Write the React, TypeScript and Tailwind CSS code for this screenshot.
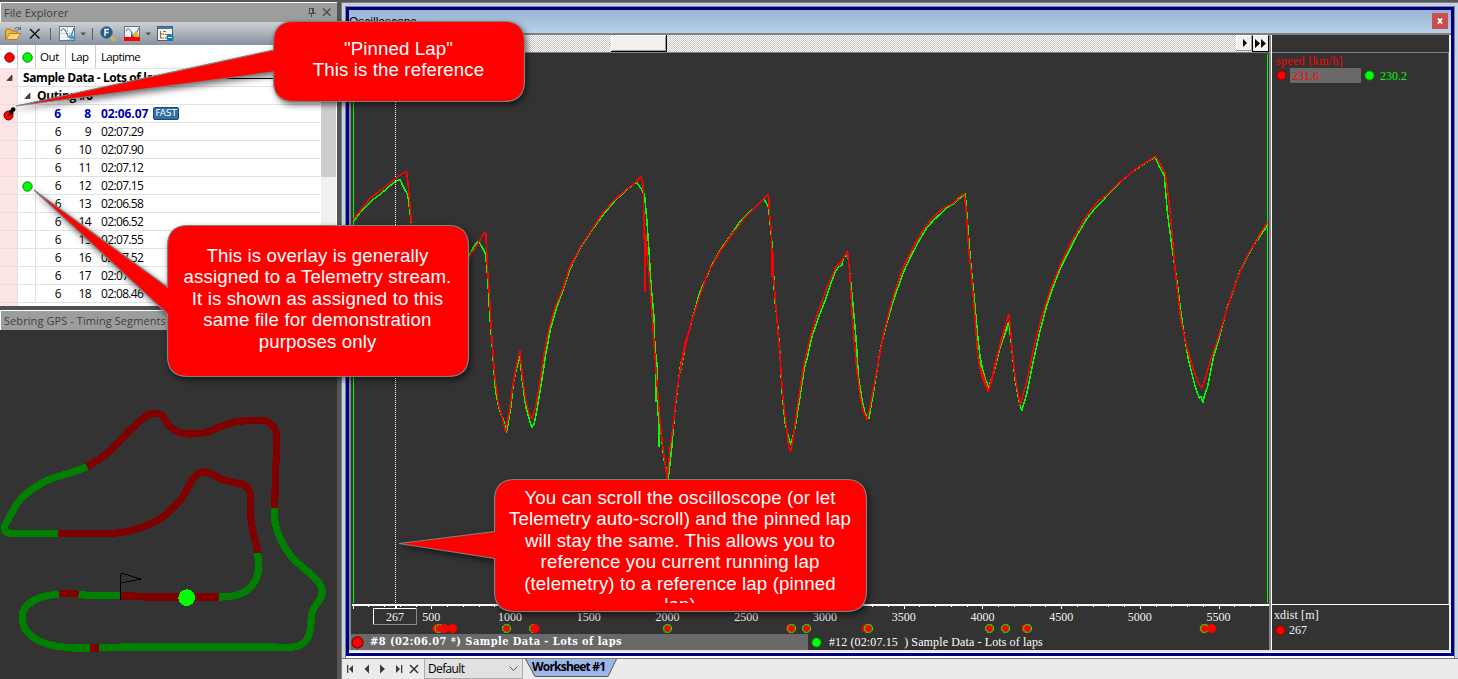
import React from "react";

const laps: [number, string][] = [
  [8, "02:06.07"],
  [9, "02:07.29"],
  [10, "02:07.90"],
  [11, "02:07.12"],
  [12, "02:07.15"],
  [13, "02:06.58"],
  [14, "02:06.52"],
  [15, "02:07.55"],
  [16, "02:07.52"],
  [17, "02:07.52"],
  [18, "02:08.46"],
];

const UI = "font-['Open_Sans',sans-serif]";
const SERIF = "font-['DejaVu_Serif_Condensed','DejaVu_Serif',serif]";

function Dot({ color, size = 11 }: { color: "red" | "green"; size?: number }) {
  return (
    <svg width={size} height={size} viewBox="0 0 11 11" className="shrink-0">
      <circle cx="5.5" cy="5.5" r="4.7" fill={color === "red" ? "#ff0000" : "#00ff00"} stroke={color === "red" ? "#7d0000" : "#007d00"} />
    </svg>
  );
}

function TitleBar({ text, buttons }: { text: string; buttons?: boolean }) {
  return (
    <div className="flex h-5 shrink-0 items-center border-l border-t border-white bg-[#9c9e9d] pl-[3px] pr-[6px] text-[#3f3f3f]">
      <span className={`${UI} whitespace-nowrap pb-px text-[11px] leading-none tracking-[0.08px]`}>{text}</span>
      {buttons && (
        <svg width="28" height="12" className="ml-auto" fill="none" stroke="#4c4c4c">
          <path d="M6.500 1V6.500M10.500 1V6.500M6 1.500H11M4.500 6.500H12.500M8.500 7V10" shapeRendering="crispEdges" />
          <path d="M9.500 2V6" />
          <path d="M20 1.500 27.500 9M27.500 1.500 20 9" strokeWidth="1.500" />
        </svg>
      )}
    </div>
  );
}

function Toolbar() {
  return (
    <div className="h-[23px] shrink-0 bg-gradient-to-b from-[#ced1d4] to-[#8992a0]">
      <svg width="337" height="23" viewBox="0 22 337 23" fill="none">
        <path d="M5.500 39V30.500L7 29H10L12 31H17V33" fill="#e8b844" stroke="#a87418" />
        <path d="M6 39.500 9.500 33.500H21L17 39.500Z" fill="#fbd56e" stroke="#b27e20" />
        <path d="M14 29Q17 26 20 28.500M20.500 26.500V29.500H17.500" stroke="#4f7198" />
        <path d="M30 29 39.500 38.500M39.500 29 30 38.500" stroke="#111" strokeWidth="1.500" />
        <path d="M50.500 28V40M92.500 28V40" stroke="#57606c" />
        <rect x="59.500" y="26.500" width="15" height="14" fill="#f1f4f7" stroke="#66798c" />
        <path d="M60 33.500H74M67.500 27V40" stroke="#b8c6d5" strokeDasharray="2 1" />
        <path d="M61 31C63 27 65 29 67 34S71 37 74 28" stroke="#285c8e" />
        <path d="M72 34V41M68.500 37.500H75.500M69.500 35 74.500 40M74.500 35 69.500 40" stroke="#2687cc" />
        <path d="M80.500 32.500H86L83.250 35.500Z" fill="#4e4e4e" />
        <path d="M110 36 115 40.500" stroke="#e1b532" strokeWidth="3" />
        <circle cx="106.500" cy="32.500" r="5.800" fill="#235a88" stroke="#426c91" />
        <path d="M105 36V29.500H109M105 32.500H108.500" stroke="white" strokeWidth="1.400" />
        <rect x="124.500" y="26.500" width="15" height="14" fill="#eef2f6" stroke="#66798c" />
        <path d="M126 31C128 27 130 29 132 33S136 34 139 28" stroke="#285c8e" />
        <path d="M132 37 136 30.500 139.500 37Z" fill="#e6b21c" />
        <path d="M131 37V33L134 37Z" fill="#216496" />
        <rect x="124" y="37" width="16" height="4" fill="#f00" />
        <path d="M145.500 32.500H151L148.250 35.500Z" fill="#4e4e4e" />
        <rect x="157.500" y="26.500" width="15" height="14" fill="#f5f2df" stroke="#41647f" />
        <path d="M158 28H172" stroke="#397bab" strokeWidth="2" />
        <path d="M160.500 31V38H164M160.500 34H164M163 31.500H166M165 34.500H169M165 38H168" stroke="#8a6d45" />
        <circle cx="170" cy="37.500" r="3.500" fill="#087ec2" />
        <path d="M168 37.500H172" stroke="white" />
      </svg>
    </div>
  );
}

function Expander() {
  return (
    <svg width="7" height="7" viewBox="0 0 7 7" className="shrink-0">
      <path d="M6 1V6.500H0.800Z" fill="#444" stroke="#222" strokeWidth="0.600" />
    </svg>
  );
}

function LapTable() {
  return (
    <div className={`${UI} flex h-[261px] shrink-0 flex-col overflow-hidden bg-white text-[12px] text-black`}>
      <div className="flex h-6 shrink-0 border-b border-[#e4e4e4] text-[11.500px] tracking-[-0.650px]">
        <div className="flex w-[18px] items-center justify-center border-r border-[#ccc] pl-px pt-px"><Dot color="red" /></div>
        <div className="flex w-[18px] items-center justify-center border-r border-[#ccc] pl-px pt-px"><Dot color="green" /></div>
        <div className="flex w-[30px] items-center border-r border-[#ccc] pl-1 pt-px tracking-[-0.400px]">Out</div>
        <div className="flex w-[30px] items-center border-r border-[#ccc] pl-[5px] pt-px">Lap</div>
        <div className="flex items-center pl-[5px] pt-px">Laptime</div>
      </div>
      <div className="flex min-h-0 flex-1">
        <div className="flex w-[320px] flex-col">
          <div className="flex h-[18px] shrink-0">
            <div className="flex w-[18px] items-center border-b border-r border-[#e2e2e2] bg-[#ffe4e4] pl-[6px]"><Expander /></div>
            <div className="flex flex-1 items-center border-b border-[#e2e2e2] pl-[5px] font-bold">
              <span className="whitespace-nowrap text-[12px] tracking-[-0.420px]">Sample Data - Lots of laps</span>
              <div className="ml-1 mt-px h-px flex-1 bg-black" />
            </div>
          </div>
          <div className="flex h-[18px] shrink-0">
            <div className="w-[18px] border-b border-r border-[#e2e2e2] bg-[#ffe4e4]" />
            <div className="flex flex-1 items-center gap-[6px] border-b border-[#e2e2e2] pl-[6px] font-bold">
              <Expander />
              <span className="whitespace-nowrap text-[12px] tracking-[-0.350px]">Outing #6</span>
            </div>
          </div>
          {laps.map(([lap, time]) => (
            <div key={lap} className="flex h-[18px] shrink-0 leading-[17px]">
              <div className="flex w-[18px] items-center justify-center border-b border-r border-[#e2e2e2] bg-[#ffe4e4]">
                {lap === 8 && (
                  <svg width="15" height="16" viewBox="0 0 15 16" className="ml-[2px] shrink-0">
                    <circle cx="6.500" cy="9.500" r="4.500" fill="#f00" stroke="#7d0000" />
                    <path d="M6 10 9 7" stroke="#000" strokeWidth="1.500" />
                    <path d="M7.500 4.500 11 8M9 6 11.500 3.500" stroke="#000" strokeWidth="2.600" />
                    <circle cx="11.200" cy="3.500" r="2.300" />
                  </svg>
                )}
              </div>
              <div className="flex w-[18px] items-center justify-center border-b border-r border-[#e2e2e2] pl-px pt-[2px]">
                {lap === 12 && <Dot color="green" />}
              </div>
              <div className={lap === 8 ? "flex flex-1 items-center border-b border-[#e2e2e2] font-bold text-[#0000b4]" : "flex flex-1 items-center border-b border-[#e2e2e2] text-[12px] tracking-[-0.650px]"}>
                <span className="w-[25px] text-right">6</span>
                <span className="w-[30px] text-right">{lap}</span>
                <span className={lap === 8 ? "ml-[10px] tracking-[-0.100px]" : "ml-[10px]"}>{time}</span>
                {lap === 8 && (
                  <span className="ml-[5px] flex h-[13px] w-[26px] items-center justify-center rounded-[2px] border border-[#174b75] bg-[#346f9f] font-['DejaVu_Sans',sans-serif] text-[9px] font-normal leading-none tracking-[-0.100px] text-white">FAST</span>
                )}
              </div>
            </div>
          ))}
          <div className="w-[18px] flex-1 border-r border-[#e2e2e2] bg-[#ffe4e4]" />
        </div>
        <div className="ml-px w-[15px] bg-[#f0f0f0]">
          <div className="h-[108px] bg-[#cdcdcd]" />
        </div>
      </div>
    </div>
  );
}

function TrackMap() {
  return (
    <svg width="337" height="349" viewBox="0 330 337 349" className="block bg-[#333]" shapeRendering="crispEdges">
      <g transform="translate(0.3 390.3) scale(.33333)" fill="none" strokeWidth="21.500">
        <g stroke="#008000">
          <path d="M259 229C215 252 182 251 140 271C101 289 67 314 47 344L25 386C12 402 9 410 15 423C25 432 40 430 60 430H140L172 429" />
          <path d="M823 352V390C829 430 846 463 871 496C903 533 923 540 947 567C970 592 971 610 954 634C932 662 933 675 932 697C930 738 919 758 890 768C865 775 850 772 820 770H370L297 773" />
          <path d="M268 773H220C180 770 127 766 93 737C60 712 60 667 78 648C102 621 136 614 176 612" />
          <path d="M234 613 285 616H362" />
          <path d="M657 620C706 621 736 609 756 584C777 558 777 532 772 488" />
        </g>
        <g stroke="#800000">
          <path d="M259 229C295 211 327 187 351 160L386 122 430 82C454 64 478 64 490 82C505 113 527 130 565 131C626 133 641 114 681 101C713 90 742 91 795 91C817 101 828 113 829 142V180L826 240 823 352" />
          <path d="M172 429H339C379 426 410 417 440 405C477 391 499 373 531 340C567 304 562 275 590 252C613 238 632 247 651 260C679 276 696 275 725 281C745 291 751 302 751 331C748 369 751 397 759 430C765 455 771 467 772 488" />
          <path d="M362 617H400L430 620H657M176 609H215L235 612M268 773H297" />
        </g>
        <path d="M361.500 629V550H368L422 566 362 578" stroke="#000" strokeWidth="3" />
        <circle cx="559" cy="622" r="25" fill="#0f0" stroke="none" />
      </g>
    </svg>
  );
}

const redLine = {
  a: "39,267 55,248 90,204 108,190 135,170 160,150 185,130 199,124 203,155 209,218 214,285 240,420 290,470 350,440 388,382 412,342 433,307 437,310 441,400 448,500 454,610 463,730 475,820 487,865 496,905 508,840 517,770 528,710 539,659 547,740 557,810 567,850 575,865 587,830 600,750 612,670 625,600 645,530 668,475 687,415 720,350 750,305 785,252 815,217 855,180 888,155 903,139 909,165 912,310 915,485 917,310 921,370 928,450 935,540 943,660 952,780 960,880 971,975 981,1045 990,950 1000,880 1008,800 1021,710 1035,635 1050,594",
  b: "0,665 8,620 20,570 32,520 45,480 58,440 72,400 84,365 100,340 117,307 135,282 155,252 175,228 195,200 215,180 245,150 265,132 268,190 274,250 276,380 278,305 280,380 288,480 298,600 308,740 320,840 325,885 331,905 338,870 352,765 370,650 383,590 395,545 410,495 430,440 442,405 455,380 467,350 480,338 490,322 502,303 508,360 517,510 530,660 540,740 550,785 561,808 570,765 590,660 610,550 625,490 645,420 665,360 685,320 710,270 738,225 755,205 785,177 800,168 820,158 834,142 852,130 858,180 865,290 875,390 885,510 893,620 905,680 924,724 935,690 955,600 970,550 985,492 989,510",
  c: "0,680 12,715 25,753 45,670 65,590 86,522 90,555 95,620 105,710 120,795 135,740 145,700 160,625 180,545 200,480 215,435 240,375 270,310 310,240 335,205 355,182 375,167 400,142 425,120 450,100 475,80 500,65 525,47 540,70 555,98 562,150 570,215 585,390 602,540 620,620 640,690 655,730 666,742 675,715 690,662 710,605 730,540 755,460 785,380 805,340 820,315 840,280 862,245",
};
const greenLine = {
  a: "39,274 65,240 93,212 120,192 150,166 168,152 180,148 190,171 203,194 209,245 214,285 240,430 300,480 350,430 388,372 402,347 415,332 425,349 436,372 442,435 449,560 457,660 466,785 478,840 490,870 499,907 512,830 520,755 530,710 539,679 546,750 557,830 568,870 575,892 582,880 590,840 605,750 617,670 630,600 650,530 670,475 690,415 720,352 755,300 790,252 825,211 855,182 888,155 901,173 913,193 920,270 927,370 933,470 941,555 945,670 947,815 949,670 952,780 957,950 960,880 971,985 984,1045 994,960 1004,840 1020,712 1035,639 1050,590",
  b: "0,668 15,590 27,540 45,475 57,431 70,400 95,345 116,305 135,278 155,250 180,212 200,193 220,175 245,150 252,147 265,172 272,240 278,310 283,440 292,520 298,590 306,730 315,820 325,860 332,885 345,830 358,750 372,655 382,620 395,560 414,504 435,450 450,405 465,365 475,350 485,345 490,320 503,315 508,360 518,460 528,570 535,680 545,745 555,790 566,805 580,725 600,600 615,535 640,450 670,365 695,312 720,265 740,232 760,210 800,172 820,160 855,130 860,190 870,320 882,440 893,560 903,650 915,690 926,715 940,670 960,590 988,515 989,530",
  c: "0,650 8,690 15,715 25,740 40,700 65,595 86,545 95,625 105,720 118,790 125,810 140,760 160,660 180,570 200,495 215,450 240,385 285,295 320,235 340,210 360,190 390,155 420,125 450,100 485,75 525,50 538,80 552,105 562,220 578,340 590,420 600,500 610,570 625,660 645,740 658,775 662,768 668,787 672,768 682,740 700,650 715,600 740,505 780,390 820,315 862,255",
};

function Trace({ color, data }: { color: string; data: { a: string; b: string; c: string } }) {
  return (
    <g fill="none" stroke={color} strokeWidth="4.600" strokeLinejoin="bevel">
      <polyline transform="translate(340.2 130.3) scale(.33333)" points={data.a} />
      <polyline transform="translate(680.2 150.3) scale(.33333)" points={data.b} />
      <polyline transform="translate(980.2 140.3) scale(.33333)" points={data.c} />
    </g>
  );
}

const minorTicks = Array.from({ length: 58 }, (_, i) => i);
const majorLabels = [500, 1000, 1500, 2000, 2500, 3000, 3500, 4000, 4500, 5000, 5500];
const plainMarkers = [437, 790.5, 866.5, 1026, 1204];
const ringMarkers = [439, 506.5, 533.5, 667.5, 791.5, 806.5, 868.5, 989.5, 1005.5, 1027.5, 1204.5];
const topMarkers = [444, 452.5, 535, 1211.5];

function Plot() {
  return (
    <svg width="918" height="581" viewBox="351 53 918 581" className="block">
      <g shapeRendering="crispEdges">
        <path d="M353.500 54V603M1267.500 54V603" stroke="#0f0" />
        <path d="M395.500 54V603" stroke="#fff" strokeDasharray="1 1" />
        <Trace color="#00ff00" data={greenLine} />
        <Trace color="#ff0000" data={redLine} />
        <path d="M352 605H1269" stroke="#fff" strokeWidth="2" />
        {minorTicks.map((i) => (
          <path key={i} d={`M${Math.round(352.6 + i * 15.745)}.5 606V${i % 5 === 0 ? 609 : 607}`} stroke="#fff" />
        ))}
        <path d="M395.500 606V608" stroke="#fff" strokeWidth="2" />
        <path d="M416 608.500H373.500V624" fill="none" stroke="#fff" />
        <path d="M373 624.500H416.500V608" fill="none" stroke="#8a8a8a" />
      </g>
      <g className="font-['Liberation_Serif',serif] text-[12px]" fill="#f4f4f4" textAnchor="middle">
        <text x="395" y="621">267</text>
        {majorLabels.map((v) => (
          <text key={v} x={352.6 + v * 0.15745} y="621">{v}</text>
        ))}
      </g>
      {plainMarkers.map((x) => (
        <circle key={x} cx={x} cy="628.500" r="4.500" fill="#f00" />
      ))}
      {ringMarkers.map((x) => (
        <circle key={x} cx={x} cy="628.500" r="4" fill="#f00" stroke="#0f0" strokeWidth="1.200" strokeDasharray="2.600 0.600" />
      ))}
      {topMarkers.map((x) => (
        <circle key={x} cx={x} cy="628.500" r="4.500" fill="#f00" />
      ))}
    </svg>
  );
}

function Oscilloscope() {
  return (
    <div className="flex h-[655px] flex-col border-x-[3px] border-t-[3px] border-[#c5d2ea] bg-[#c5d2ea]">
      <div className="flex h-[652px] flex-col border border-[#808080] border-b-0">
        <div className="flex h-[649px] flex-col border-[3px] border-[#000080] bg-[#333]">
          <div className="flex h-[23px] shrink-0 items-center justify-between bg-gradient-to-b from-[#99b4d1] to-[#b9d1ea] pr-[3px]">
            <span className="pt-px text-[12px] leading-none text-black font-['Liberation_Sans',sans-serif]">Oscilloscope</span>
            <div className="mb-[2px] flex h-4 w-4 items-center justify-center bg-[#c75050]">
              <svg width="6" height="6" viewBox="0 0 6 6"><path d="M1 0.500 5 5.500M5 0.500 1 5.500" stroke="#fff" strokeWidth="1.800" /></svg>
            </div>
          </div>
          <div className="h-[2px] shrink-0 bg-[#808080]" />
          <div className="flex min-h-0 flex-1 border-r-2 border-[#eee]">
            <div className="flex w-[920px] flex-col border-l-2 border-[#8a8a8a]">
              <div className="flex h-[17px] shrink-0 bg-[#f6f6f6] bg-[repeating-conic-gradient(#c4c4c4_0_25%,#fff_0_50%)] bg-[size:2px_2px]">
                <div className="ml-[260px] h-[17px] w-[56px] border-b border-r border-b-black border-r-black bg-white">
                  <div className="ml-px mt-px h-[15px] border-b border-r border-[#999] bg-[#f0f0f0]" />
                </div>
                <div className="ml-auto flex h-4 w-4 items-center justify-center border border-b-[#999] border-l-white border-r-[#999] border-t-white bg-[#f0f0f0]">
                  <svg width="5" height="8"><path d="M1 0V8L5 4Z" /></svg>
                </div>
                <div className="flex h-[17px] w-[17px] items-center justify-center border border-b-black border-l-black border-r-black border-t-white bg-[#f0f0f0]">
                  <svg width="13" height="9" className="shrink-0"><path d="M1 0V9L6 4.500ZM7 0V9L12 4.500Z" /></svg>
                </div>
              </div>
              <div className="h-px shrink-0 bg-[#808080]" />
              <Plot />
              <div className={`${SERIF} flex h-4 shrink-0 text-[11px] leading-4 text-white`}>
                <div className="flex w-[457px] items-center gap-[6px] whitespace-pre bg-[#696969] font-bold tracking-[0.430px]">
                  <Dot color="red" size={13} />
                  <span>#8 (02:06.07 *) Sample Data - Lots of laps</span>
                </div>
                <div className="flex items-center gap-[7px] whitespace-pre pl-[3px] text-[12px] tracking-[0.120px] font-['Liberation_Serif',serif]">
                  <Dot color="green" />
                  <span>#12 (02:07.15  ) Sample Data - Lots of laps</span>
                </div>
              </div>
            </div>
            <div className="w-[3px] border-r border-white bg-[#888]" />
            <div className="flex min-w-0 flex-1 flex-col font-['Liberation_Serif',serif] text-[12px]">
              <div className="h-[17px] shrink-0" />
              <div className="h-px shrink-0 bg-[#808080]" />
              <div className="h-[551px] shrink-0 border-r border-[#808080] pl-[4px] text-[#f00]">
                <div className="h-[15px] pt-px leading-[15px] tracking-[0.320px]">speed [km/h]</div>
                <div className="flex h-[15px] items-center">
                  <Dot color="red" />
                  <div className="ml-[3px] h-[15px] w-[71px] bg-[#696969] pl-[2px] leading-4">231.6</div>
                  <div className="ml-[3px] flex items-center"><Dot color="green" /></div>
                  <div className="ml-[5px] leading-4 text-[#0f0]">230.2</div>
                </div>
              </div>
              <div className="h-px shrink-0 bg-white" />
              <div className="pl-[2px] pt-[3px] leading-[15px] text-[#f4f4f4]">
                <div className="tracking-[0.120px]">xdist [m]</div>
                <div className="flex items-center gap-[3px] pl-px"><Dot color="red" /><span>267</span></div>
              </div>
            </div>
          </div>
          <div className="h-[3px] shrink-0 border-b border-white bg-[#e6e6e6]" />
        </div>
        <div className="h-[2px] bg-white" />
      </div>
    </div>
  );
}

function WorksheetBar() {
  return (
    <div className={`${UI} flex h-[21px] shrink-0 border-t border-[#777] bg-[#ebebeb] text-black`}>
      <svg width="82" height="20" viewBox="342 659 82 20" fill="#3d3d3d" stroke="none">
        <path d="M347 665H348.300V673H347ZM353 665V673L349 669ZM369 664.500V673.500L364.500 669ZM380 664.500V673.500L385 669ZM396 665V673L400 669ZM401 665H402.300V673H401Z" />
        <path d="M410 665 418 673M418 665 410 673" stroke="#333" strokeWidth="1.500" />
      </svg>
      <div className="flex h-5 w-[99px] items-center justify-between border border-t-0 border-[#acacac] bg-[#e1e1e1] pl-[3px] pr-[4px] text-[12px] tracking-[-0.650px]">
        <span>Default</span>
        <svg width="9" height="6" fill="none" stroke="#555"><path d="M0.500 0.500 4.500 4.500 8.500 0.500" /></svg>
      </div>
      <div className="grid">
        <svg width="96" height="19" className="col-start-1 row-start-1"><path d="M2 -1 12 17.500H85L94 -1" fill="#9fb5e8" stroke="#555" /></svg>
        <span className="col-start-1 row-start-1 pl-[9px] text-[12px] font-bold leading-[16px] tracking-[-0.800px]">Worksheet #1</span>
      </div>
    </div>
  );
}

function Balloon({ d }: { d: string }) {
  return (
    <svg width="1458" height="679" className="absolute left-0 top-0 drop-shadow-[2px_3px_3px_rgba(0,0,0,0.55)]">
      <path d={d} fill="#f00" stroke="#808080" strokeWidth="1.200" />
    </svg>
  );
}

function Callouts() {
  return (
    <div className="pointer-events-none absolute inset-0 text-center font-['Liberation_Sans',sans-serif] text-[18.670px] leading-[21.500px] tracking-[0.120px] text-white">
      <Balloon d="M294 21.500H504Q524.500 21.500 524.500 42V81Q524.500 101.500 504 101.500H294Q273.500 101.500 273.500 81V72L16 106 273.500 50V42Q273.500 21.500 294 21.500Z" />
      <Balloon d="M188 225.500H448Q468.500 225.500 468.500 246V356Q468.500 376.500 448 376.500H188Q167.500 376.500 167.500 356V314L34 190 167.500 287V246Q167.500 225.500 188 225.500Z" />
      <Balloon d="M515 479.500H846Q866.500 479.500 866.500 500V591Q866.500 611.500 846 611.500H515Q494.500 611.500 494.500 591V558.500L399 543.500 494.500 531.500V500Q494.500 479.500 515 479.500Z" />
      <div className="absolute left-[273px] top-[37.500px] w-[251px]">"Pinned Lap"<br />This is the reference</div>
      <div className="absolute left-[167px] top-[244.500px] w-[301px] whitespace-nowrap">
        This is overlay is generally<br />assigned to a Telemetry stream.<br />It is shown as assigned to this<br />same file for demonstration<br />purposes only
      </div>
      <div className="absolute left-[494px] top-[486.500px] h-[116.500px] w-[372px] overflow-hidden whitespace-nowrap">
        You can scroll the oscilloscope (or let<br />Telemetry auto-scroll) and the pinned lap<br />will stay the same. This allows you to<br />reference you current running lap<br />(telemetry) to a reference lap (pinned<br />lap)
      </div>
    </div>
  );
}

export default function App() {
  return (
    <div className="relative flex h-[679px] w-[1458px] overflow-hidden bg-[#555] pt-[2px]">
      <div className="flex w-[337px] shrink-0 flex-col">
        <TitleBar text="File Explorer" buttons />
        <Toolbar />
        <LapTable />
        <div className="h-1 shrink-0 bg-[#505052]" />
        <TitleBar text="Sebring GPS - Timing Segments" />
        <TrackMap />
      </div>
      <div className="ml-1 flex w-[1117px] flex-col border-l border-t border-[#808080]">
        <Oscilloscope />
        <WorksheetBar />
      </div>
      <Callouts />
    </div>
  );
}
